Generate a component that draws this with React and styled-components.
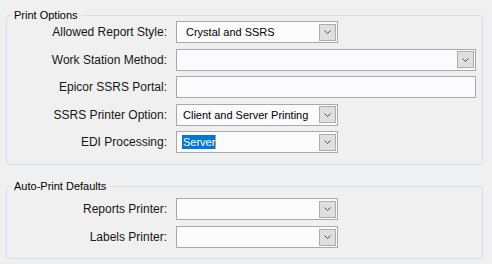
import styled, { createGlobalStyle } from "styled-components";

const GlobalStyle = createGlobalStyle`
  html, body {
    margin: 0;
    background: #f0f0f0;
  }
  body {
    font-family: "Liberation Sans", Arial, sans-serif;
    color: #111;
  }
`;

const Page = styled.div`
  width: 492px;
  height: 264px;
  box-sizing: border-box;
  padding: 9px 9px 0 6px;
  display: flex;
  flex-direction: column;
  gap: ${(props) => props.gap}px;
`;

const Group = styled.fieldset`
  margin: 0;
  min-width: 0;
  border: 1px solid #d7dfe6;
  border-radius: 3px;
  padding: ${(props) => props.pad};
`;

const Legend = styled.legend`
  margin-left: 4px;
  padding: 0 3px;
  font-size: 11px;
  line-height: 12px;
  color: #000;
`;

const Rows = styled.div`
  display: grid;
  grid-template-columns: 160px auto;
  column-gap: 9px;
  row-gap: ${(props) => props.gap}px;
  align-items: center;
`;

const Label = styled.label`
  font-size: 12px;
  text-align: right;
  white-space: nowrap;
  color: #161616;
`;

const Box = styled.div`
  width: ${(props) => props.w}px;
  height: 22px;
  box-sizing: border-box;
  border: 1px solid #a9a9a9;
  background: #fbfbfd;
  display: flex;
  align-items: center;
  justify-content: space-between;
  font-size: 11px;
  color: #000;
`;

const Value = styled.span`
  padding-left: ${(props) => props.inset}px;
  white-space: nowrap;
`;

const Selected = styled.span`
  margin-left: 5px;
  padding: 0 0 0 1px;
  background: #0078d7;
  color: #fff;
  line-height: 14px;
  border-right: 1px solid #ff8c1a;
`;

const DropButton = styled.div`
  width: 17px;
  height: 17px;
  box-sizing: border-box;
  margin-right: 1px;
  border: 1px solid #adadad;
  background: #dfdfdf;
  display: flex;
  align-items: center;
  justify-content: center;
`;

function Chevron() {
  return (
    <svg width="7" height="4" viewBox="0 0 7 4">
      <path d="M0.5 0.5 L3.5 3.5 L6.5 0.5" fill="none" stroke="#4a4a4a" strokeWidth="1" />
    </svg>
  );
}

function Combo({ w, inset = 6, children }) {
  return (
    <Box w={w}>
      <Value inset={inset}>{children}</Value>
      <DropButton>
        <Chevron />
      </DropButton>
    </Box>
  );
}

export default function App() {
  return (
    <>
      <GlobalStyle />
      <Page gap={15}>
        <Group pad="0 0 11px 0">
          <Legend>Print Options</Legend>
          <Rows gap={5.5}>
            <Label>Allowed Report Style:</Label>
            <Combo w={162} inset={9}>Crystal and SSRS</Combo>
            <Label>Work Station Method:</Label>
            <Combo w={300} />
            <Label>Epicor SSRS Portal:</Label>
            <Box w={300} />
            <Label>SSRS Printer Option:</Label>
            <Combo w={162}>Client and Server Printing</Combo>
            <Label>EDI Processing:</Label>
            <Box w={162}>
              <Selected>Server</Selected>
              <DropButton>
                <Chevron />
              </DropButton>
            </Box>
          </Rows>
        </Group>
        <Group pad="6px 0 10px 0">
          <Legend>Auto-Print Defaults</Legend>
          <Rows gap={6}>
            <Label>Reports Printer:</Label>
            <Combo w={162} />
            <Label>Labels Printer:</Label>
            <Combo w={162} />
          </Rows>
        </Group>
      </Page>
    </>
  );
}
